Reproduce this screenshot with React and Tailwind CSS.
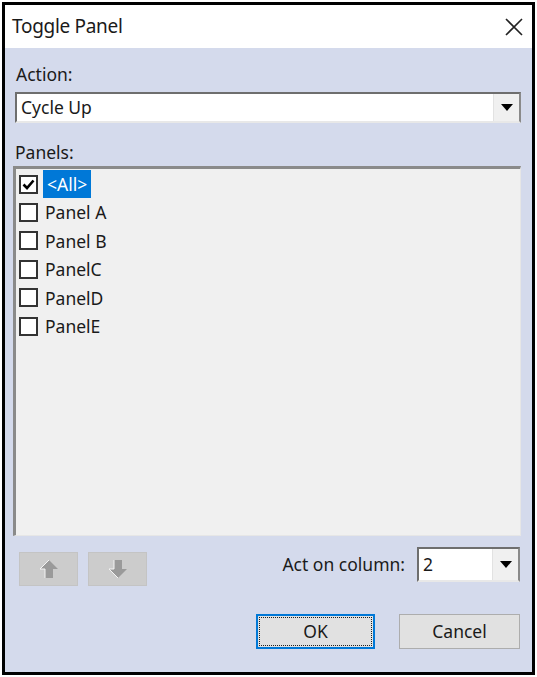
import React from 'react';

const panels = ['Panel A', 'Panel B', 'PanelC', 'PanelD', 'PanelE'];

function Checkbox({ checked }) {
  return (
    <div className="w-[19px] h-[19px] border-2 border-[#333] bg-white flex items-center justify-center shrink-0">
      {checked && (
        <svg width="13" height="11" viewBox="0 0 13 11">
          <path d="M1.5 5.5 L5 9 L11.5 1.5" fill="none" stroke="#000" strokeWidth="2.6" />
        </svg>
      )}
    </div>
  );
}

function Arrow() {
  return (
    <div className="w-[26px] h-full flex items-center justify-center bg-[#f0f0f0] border-l border-[#e2e2e2]">
      <svg width="12" height="7" viewBox="0 0 12 7">
        <path d="M0 0 H12 L6 7 Z" fill="#000" />
      </svg>
    </div>
  );
}

function App() {
  return (
    <div className="w-[537px] h-[677px] bg-white p-[2px] font-['Noto_Sans',sans-serif] text-[#1a1a1a]">
      <div className="w-full h-full border-[3px] border-black flex flex-col">
        {/* title bar */}
        <div className="h-[43px] bg-white flex items-center justify-between pl-[7px] pr-[8px] shrink-0">
          <span className="text-[19px] tracking-[-0.3px]">Toggle Panel</span>
          <svg width="20" height="20" viewBox="0 0 20 20">
            <path d="M2 2 L18 18 M18 2 L2 18" stroke="#222" strokeWidth="1.6" />
          </svg>
        </div>

        <div className="flex-1 bg-[#d4daec] flex flex-col px-[8px] pt-[15px] pb-[18px] text-[17.5px]">
          <div className="leading-[22px] pl-[3px]">Action:</div>
          <div className="mt-[7px] ml-[2px] h-[31px] w-[506px] flex bg-white border-2 border-t-[#6e6e6e] border-l-[#6e6e6e] border-r-[#8a8a8a] border-b-[#e8e8e8]">
            <div className="flex-1 flex items-center pl-[4px]">Cycle Up</div>
            <Arrow />
          </div>

          <div className="mt-[18px] leading-[22px] pl-[2px]">Panels:</div>
          <div className="mt-[3px] h-[370px] w-[508px] bg-[#f0f0f0] border-t-[3px] border-l-[3px] border-[#8a8a8a] border-r border-b border-r-[#e6e6e6] border-b-[#e6e6e6] pt-[1px] pl-[3px]">
            <div className="h-[28.4px] flex items-center gap-[5px]">
              <Checkbox checked />
              <span className="h-full px-[4px] bg-[#0078d7] text-white flex items-center">&lt;All&gt;</span>
            </div>
            {panels.map((p) => (
              <div key={p} className="h-[28.4px] flex items-center gap-[7px]">
                <Checkbox />
                <span>{p}</span>
              </div>
            ))}
          </div>

          <div className="mt-[11px] flex items-start">
            <div className="flex gap-[10px] pl-[6px] pt-[5px]">
              <div className="w-[59px] h-[34px] bg-[#cccccc] border border-[#c4c4c4] flex items-center justify-center">
                <svg width="20" height="20" viewBox="0 0 20 20">
                  <path d="M10 1 L19 10 H14 V19 H6 V10 H1 Z" fill="#9a9a9a" />
                  <path d="M10 1 L1 10 H6 V19" fill="none" stroke="#f4f4f4" strokeWidth="1" />
                </svg>
              </div>
              <div className="w-[59px] h-[34px] bg-[#cccccc] border border-[#c4c4c4] flex items-center justify-center">
                <svg width="20" height="20" viewBox="0 0 20 20">
                  <path d="M6 1 H14 V10 H19 L10 19 L1 10 H6 Z" fill="#9a9a9a" />
                  <path d="M6 1 V10 H1 L10 19" fill="none" stroke="#f4f4f4" strokeWidth="1" />
                </svg>
              </div>
            </div>
            <div className="flex-1" />
            <span className="mr-[12px] h-[35px] flex items-center">Act on column:</span>
            <div className="h-[35px] w-[103px] flex bg-white border-2 border-t-[#6e6e6e] border-l-[#6e6e6e] border-r-[#8a8a8a] border-b-[#e8e8e8] mr-[4px]">
              <div className="flex-1 flex items-center pl-[4px]">2</div>
              <Arrow />
            </div>
          </div>

          <div className="mt-[28px] flex justify-end gap-[24px] pr-[4px]">
            <div className="w-[119px] h-[35px] bg-[#e1e1e1] border-2 border-[#0078d7] p-[1px]">
              <div className="w-full h-full border border-dotted border-[#222] flex items-center justify-center">OK</div>
            </div>
            <div className="w-[121px] h-[35px] bg-[#e1e1e1] border border-[#adadad] flex items-center justify-center">Cancel</div>
          </div>
        </div>
      </div>
    </div>
  );
}

export default App;
